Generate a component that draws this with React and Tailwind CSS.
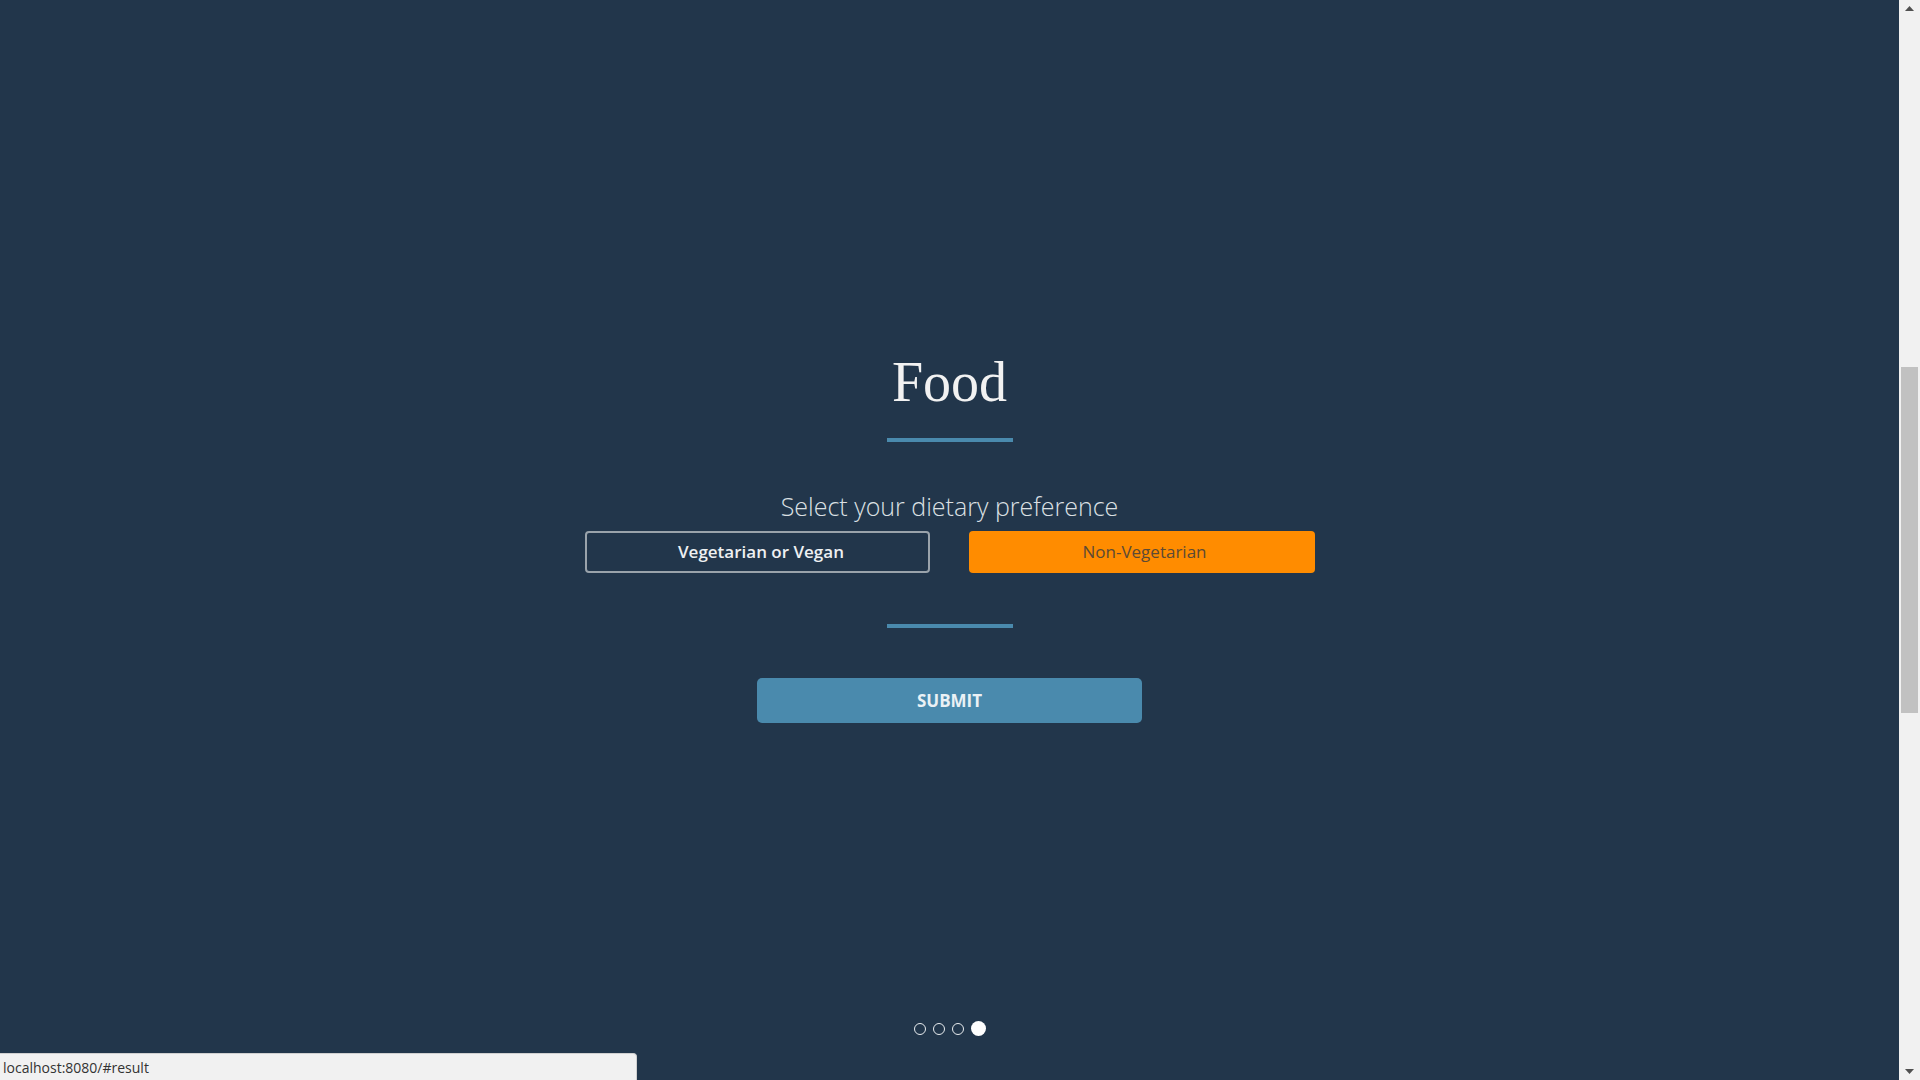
import React from 'react';

const Dots = () => {
  return (
    <div className="absolute bottom-[44px] left-0 right-0 flex items-center justify-center gap-[7px] pl-[1px]">
      <span className="w-[12px] h-[12px] rounded-full border-[1.5px] border-[#e8ecef]"></span>
      <span className="w-[12px] h-[12px] rounded-full border-[1.5px] border-[#e8ecef]"></span>
      <span className="w-[12px] h-[12px] rounded-full border-[1.5px] border-[#e8ecef]"></span>
      <span className="w-[15px] h-[15px] rounded-full bg-white"></span>
    </div>
  );
};

const Scrollbar = () => {
  return (
    <div className="w-[21px] h-full bg-[#f1f1f1] flex flex-col items-center">
      <div className="h-[17px] flex items-center justify-center">
        <svg width="9" height="5" viewBox="0 0 9 5"><polygon points="4.5,0 9,5 0,5" fill="#505050" /></svg>
      </div>
      <div className="flex-1 w-full relative">
        <div className="absolute left-[2px] top-[350px] w-[17px] h-[346px] bg-[#c1c1c1]"></div>
      </div>
      <div className="h-[17px] flex items-center justify-center">
        <svg width="9" height="5" viewBox="0 0 9 5"><polygon points="0,0 9,0 4.5,5" fill="#505050" /></svg>
      </div>
    </div>
  );
};

export default function App() {
  return (
    <div className="w-[1920px] h-[1080px] flex overflow-hidden bg-[#22364b]">
      {/* Food section */}
      <div className="relative flex-1 h-full flex flex-col items-center pt-[350px]">
        <h1 className="text-[56px] leading-[64px] text-[#f2f2f2] font-['Liberation_Serif',serif]">Food</h1>
        <div className="mt-[24px] w-[126px] h-[4px] bg-[#4a8aad]"></div>

        <p className="mt-[48px] text-[25px] leading-[32px] font-light text-[#dce0e4] font-['Open_Sans',sans-serif]">
          Select your dietary preference
        </p>
        <div className="mt-[9px] flex gap-[39px] font-['Open_Sans',sans-serif]">
          <button className="w-[345px] h-[42px] pl-[8px] rounded-[4px] border-2 border-[#9aa3ab] text-[17px] font-semibold text-[#eef0f2]">
            Vegetarian or Vegan
          </button>
          <button className="w-[346px] h-[42px] pl-[6px] rounded-[4px] bg-[#ff8c00] text-[17px] text-[#5c4a35]">
            Non-Vegetarian
          </button>
        </div>

        <div className="mt-[51px] w-[126px] h-[4px] bg-[#4a8aad]"></div>

        <button className="mt-[50px] w-[385px] h-[45px] rounded-[5px] bg-[#4a8aad] text-[17px] font-bold text-[#eaf1f5] font-['Open_Sans',sans-serif]">
          SUBMIT
        </button>

        <Dots />

        {/* status bar */}
        <div className="absolute left-0 bottom-0 w-[637px] h-[27px] bg-[#f1f1f1] border-t border-r border-[#d0d0d0] rounded-tr-[4px] px-[3px] flex items-center text-[14px] text-[#333] font-['Open_Sans',sans-serif]">
          localhost:8080/#result
        </div>
      </div>
      <Scrollbar />
    </div>
  );
}
